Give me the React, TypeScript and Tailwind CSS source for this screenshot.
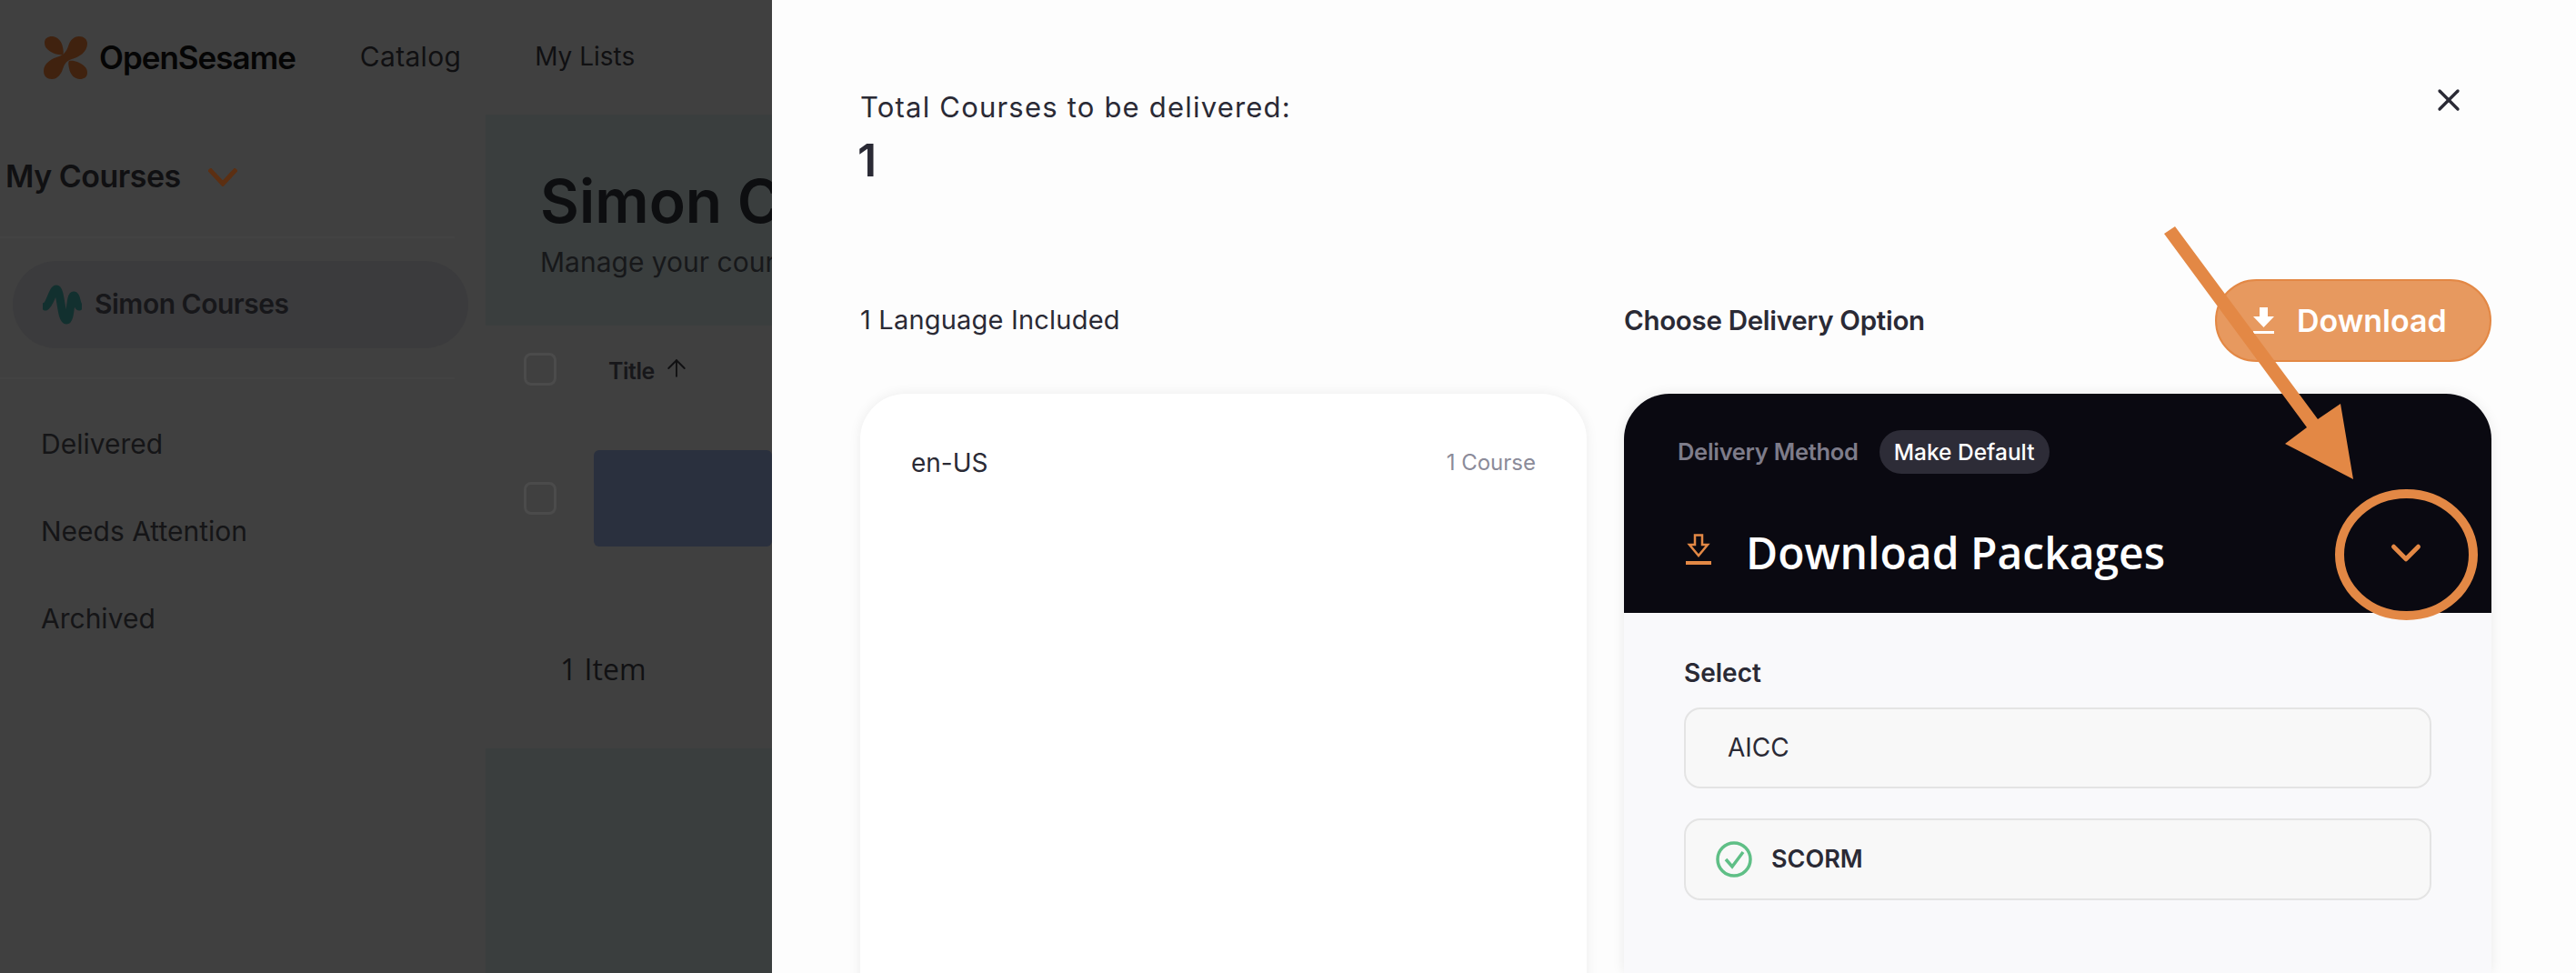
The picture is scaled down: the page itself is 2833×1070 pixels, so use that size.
import { X, ArrowUp, ChevronDown } from 'lucide-react';

function Logo() {
  return (
    <svg width="49" height="47" viewBox="0 0 49 47" fill="#40220f">
      <path d="M1 7C1 2 5 0 9 0C15 0 20 5 21 12C22 16 22 19 21 20C16 21 8 18 4 14C2 12 1 10 1 7Z" />
      <path d="M48 40C48 45 44 47 40 47C34 47 29 42 28 35C27 31 27 28 28 27C33 26 41 29 45 33C47 35 48 37 48 40Z" />
      <path d="M48 8C48 3 44 0 39 0C33 0 29 4 27 11C25 17 22 20 17 22C10 24 0 29 0 38C0 44 4 47 9 47C15 47 19 42 21 36C23 30 25 27 31 25C39 23 48 17 48 8Z" />
    </svg>
  );
}

function WaveIcon() {
  return (
    <svg width="43" height="44" viewBox="0 0 43 44" fill="none" stroke="#12302f" strokeWidth="9" strokeLinecap="round">
      <path d="M3 24C8 22 11 5 15 5C20 5 20 39 26 39C31 39 30 12 34 12C37 12 37 22 40 24" />
    </svg>
  );
}

function Checkbox() {
  return <div className="h-[36px] w-[36px] shrink-0 rounded-[8px] border-[3px] border-[#4b4b4b]" />;
}

function DownloadSolid() {
  return (
    <svg width="23" height="29" viewBox="0 0 23 29" fill="white">
      <path d="M7 0H16V10H23L11.500 22L0 10H7Z" />
      <rect x="0" y="26" width="23" height="3" />
    </svg>
  );
}

function DownloadOutline() {
  return (
    <svg width="30" height="34" viewBox="0 0 30 34" fill="none" stroke="#e38845" strokeWidth="2.500">
      <path d="M11 1.500H19V12H25L15 24L5 12H11Z" />
      <path d="M1 32H29" strokeWidth="4" />
    </svg>
  );
}

function CheckCircle() {
  return (
    <svg width="40" height="40" viewBox="0 0 40 40" fill="none" stroke="#5fbf86">
      <circle cx="20" cy="20" r="18" strokeWidth="3.500" />
      <path d="M11 20L18 28L30 12" strokeWidth="3.500" />
    </svg>
  );
}

export default function App() {
  return (
    <div className="relative h-[1070px] w-full overflow-hidden bg-[#404040] font-['Inter','Liberation_Sans',sans-serif] text-[#101012]">
      {/* Page behind the drawer */}
      <header className="flex h-[126px] items-center pl-[48px]">
        <Logo />
        <span className="ml-[12px] text-[35px] font-semibold tracking-[-1px] text-[#050505]">OpenSesame</span>
        <span className="ml-[71px] -mt-[2px] text-[30px] tracking-[0.3px]">Catalog</span>
        <span className="ml-[81px] -mt-[2px] text-[28px]">My Lists</span>
      </header>

      <div className="flex h-[944px]">
        <aside className="w-[534px] shrink-0">
          <div className="flex h-[136px] w-[500px] items-center border-b-2 border-[#434343] pl-[6px]">
            <span className="text-[34px] font-semibold tracking-[-0.5px]">My Courses</span>
            <svg className="ml-[30px] mt-[4px]" width="32" height="20" viewBox="0 0 32 20" fill="none" stroke="#5c2f12" strokeWidth="5">
              <path d="M1 1L16 17L31 1" />
            </svg>
          </div>
          <div className="ml-[14px] mt-[25px] flex h-[96px] w-[501px] items-center rounded-[48px] bg-[#3b3b3d] pl-[33px]">
            <WaveIcon />
            <span className="ml-[14px] -mt-[2px] text-[30px] font-semibold tracking-[-0.5px] text-[#17171a]">Simon Courses</span>
          </div>
          <div className="mt-[32px] w-[500px] border-b-2 border-[#434343]" />
          <nav className="mt-[23px] flex flex-col pl-[45px] text-[30px] text-[#151517]">
            <span className="flex h-[96px] items-center">Delivered</span>
            <span className="flex h-[96px] items-center">Needs Attention</span>
            <span className="flex h-[96px] items-center">Archived</span>
          </nav>
        </aside>

        <main className="w-[315px] shrink-0 overflow-hidden whitespace-nowrap bg-[#3a3e3e]">
          <div className="h-[232px] pl-[60px] pt-[60px]">
            <h1 className="text-[66px] font-semibold leading-[70px] text-[#0d0e10]">Simon Courses</h1>
            <p className="mt-[15px] text-[30px] leading-[34px] text-[#17181a]">Manage your courses</p>
          </div>
          <div className="h-[465px] bg-[#404040] pl-[42px]">
            <div className="flex h-[96px] items-center">
              <Checkbox />
              <span className="ml-[57px] mt-[6px] text-[25px] font-semibold tracking-[-0.5px] text-[#17171a]">Title</span>
              <ArrowUp className="mb-[2px] ml-[9px]" size={30} strokeWidth={1.5} />
            </div>
            <div className="flex items-center pt-[41px]">
              <Checkbox />
              <div className="ml-[41px] h-[106px] w-[300px] rounded-[6px] bg-[#2a303e]" />
            </div>
            <p className="ml-[-2px] mt-[113px] pl-[42px] font-['Open_Sans',sans-serif] text-[32px] leading-[44px] text-[#111113]">1 Item</p>
          </div>
        </main>
      </div>

      {/* Drawer */}
      <section className="absolute bottom-0 left-[849px] right-0 top-0 bg-[#fdfdfd] pl-[97px] pr-[93px] text-[#2a2a35]">
        <div className="flex h-[307px] items-start justify-between pr-[33px] pt-[96px]">
          <div>
            <p className="text-[31px] leading-[44px] tracking-[1.2px]">Total Courses to be delivered:</p>
            <p className="-ml-[3px] mt-[8px] text-[50px] font-semibold leading-[56px]">1</p>
          </div>
          <X className="-mr-[6px] -mt-[6px]" size={40} strokeWidth={2} color="#2a2a35" />
        </div>

        <div className="flex gap-[41px]">
          <div className="w-[799px] shrink-0">
            <div className="flex h-[91px] items-center pb-[2px]">
              <span className="text-[29px] tracking-[0.2px]">1 Language Included</span>
            </div>
            <div className="mt-[35px] flex h-[700px] items-start justify-between rounded-t-[50px] bg-white px-[56px] pt-[56px] shadow-[0_0_14px_rgba(0,0,0,0.07)]">
              <span className="text-[28px] leading-[40px]">en-US</span>
              <span className="text-[24px] leading-[40px] text-[#8b8b99]">1 Course</span>
            </div>
          </div>

          <div className="min-w-0 flex-1">
            <div className="flex h-[91px] items-center justify-between">
              <span className="text-[29.500px] font-semibold tracking-[-0.3px]">Choose Delivery Option</span>
              <button className="flex h-[91px] w-[304px] items-center rounded-[46px] border-2 border-[#e38845] bg-[#e7995f] pl-[40px] text-white">
                <DownloadSolid />
                <span className="ml-[25px] text-[34px] font-semibold">Download</span>
              </button>
            </div>
            <div className="mt-[35px] overflow-hidden rounded-t-[50px] shadow-[0_0_14px_rgba(0,0,0,0.08)]">
              <div className="h-[241px] bg-[#0a0911] pl-[59px] pr-[67px] pt-[40px]">
                <div className="flex items-center">
                  <span className="text-[25.500px] font-semibold tracking-[-0.3px] text-[#7e7c8a]">Delivery Method</span>
                  <span className="ml-[23px] flex h-[48px] w-[187px] items-center justify-center rounded-[24px] bg-[#2d2c37] text-[24.500px] font-medium text-white">
                    Make Default
                  </span>
                </div>
                <div className="mt-[54px] flex items-center justify-between">
                  <div className="flex items-center">
                    <span className="ml-[8px] -mt-[8px]">
                      <DownloadOutline />
                    </span>
                    <span className="ml-[37px] font-['Open_Sans',sans-serif] text-[48px] font-semibold leading-[66px] text-white">
                      Download Packages
                    </span>
                  </div>
                  <ChevronDown size={54} strokeWidth={2.2} color="#e38845" />
                </div>
              </div>
              <div className="h-[396px] bg-[#f9f9fb] px-[66px] pt-[49px]">
                <p className="text-[28px] font-semibold leading-[34px]">Select</p>
                <div className="mt-[21px] flex h-[89px] items-center rounded-[18px] border-2 border-[#e4e4e4] bg-[#f8f8f8] pb-[2px] pl-[46px] text-[28px]">
                  AICC
                </div>
                <div className="mt-[33px] flex h-[90px] items-center rounded-[18px] border-2 border-[#e4e4e4] bg-[#f8f8f8] pl-[33px]">
                  <CheckCircle />
                  <span className="ml-[21px] text-[27px] font-semibold">SCORM</span>
                </div>
              </div>
            </div>
          </div>
        </div>
      </section>

      {/* Hand drawn callout on top of the screenshot */}
      <svg className="pointer-events-none absolute left-0 top-0" width="2833" height="1070" viewBox="0 0 2833 1070" fill="none">
        <polygon points="2380,257 2392,249 2549,461 2574,444 2588,527 2513,488 2537,470" fill="#e38845" />
        <ellipse cx="2646.5" cy="610" rx="73.5" ry="67" stroke="#e38845" strokeWidth="10" />
      </svg>
    </div>
  );
}
